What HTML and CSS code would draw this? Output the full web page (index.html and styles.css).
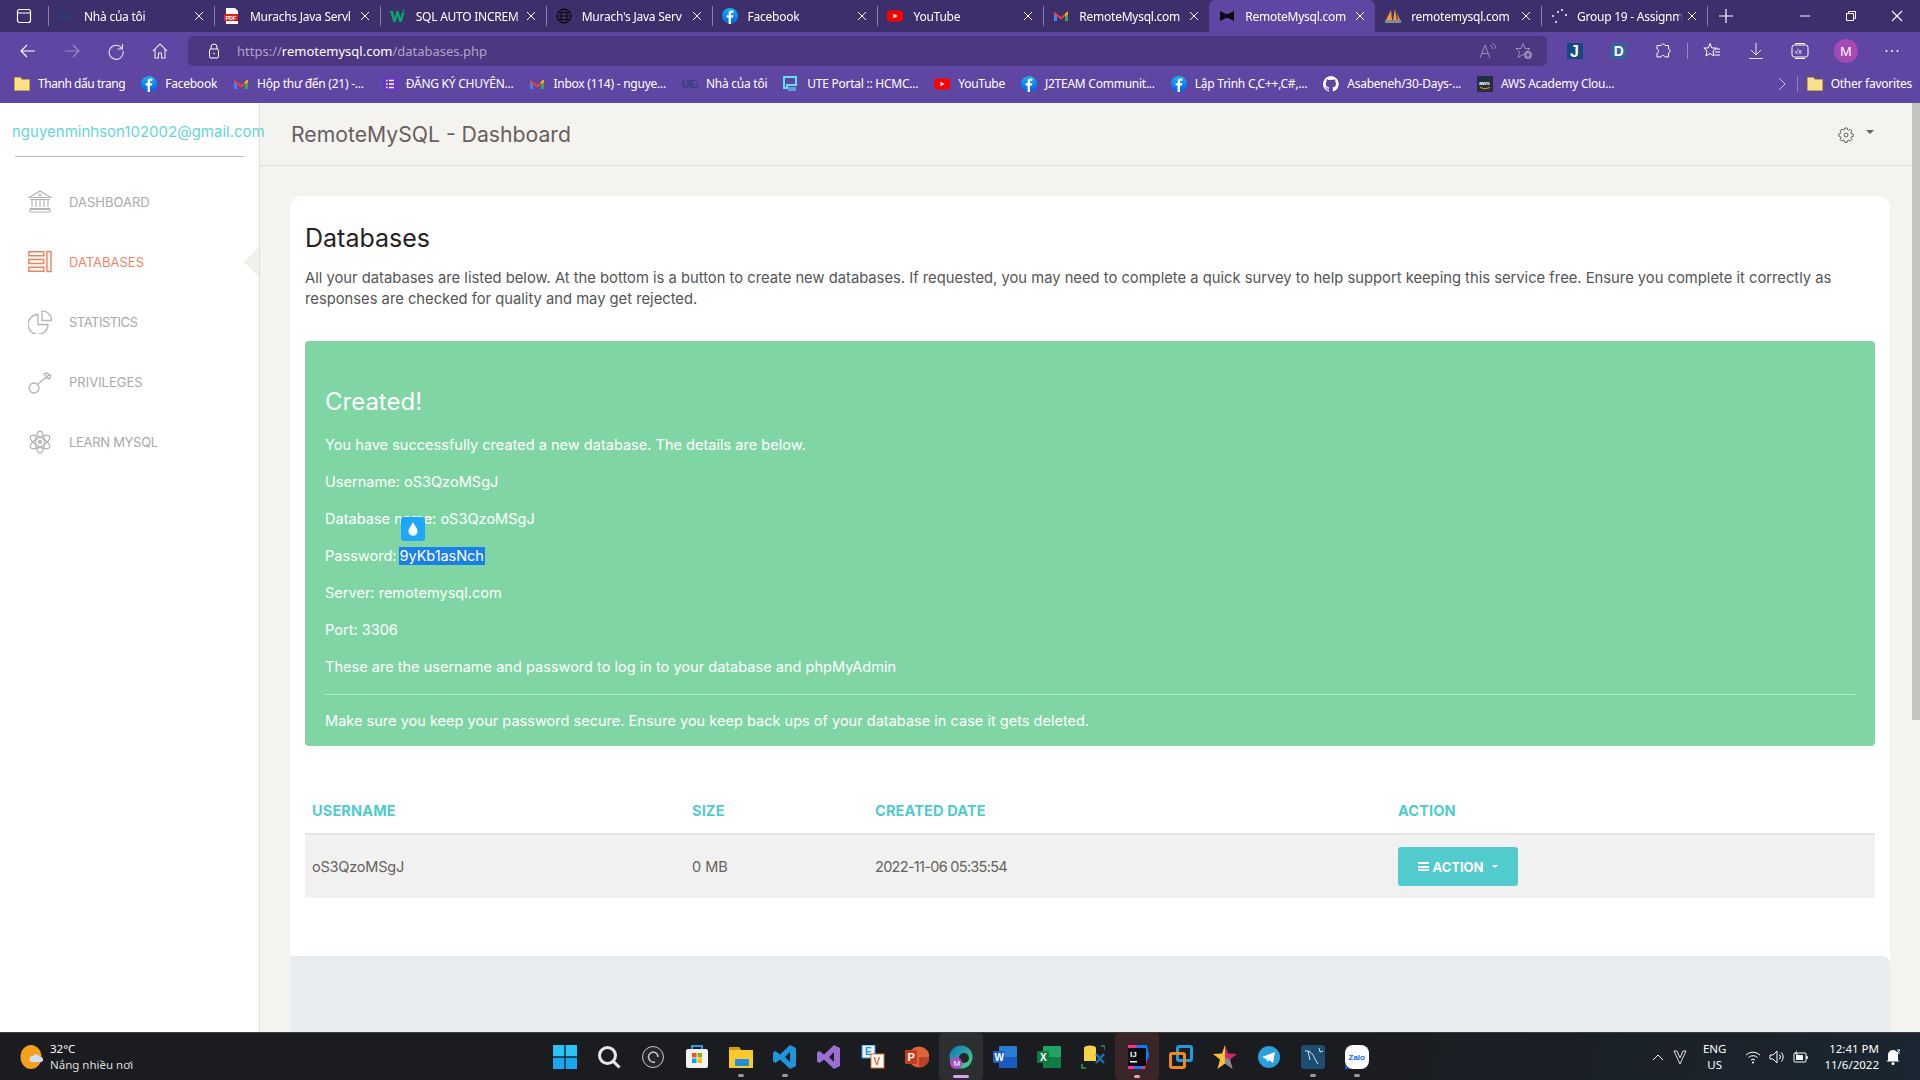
FILE: index.html
```html
<!DOCTYPE html>
<html lang="en">
<head>
<meta charset="utf-8">
<title>RemoteMySQL - Dashboard</title>
<link rel="stylesheet" href="styles.css">
</head>
<body>
<svg class="sprite" aria-hidden="true">
  <defs>
    <linearGradient id="fbg" x1="0" y1="0" x2="0" y2="1"><stop offset="0" stop-color="#19afff"/><stop offset="1" stop-color="#0062e0"/></linearGradient>
    <linearGradient id="edg" x1="0" y1="0" x2="1" y2="1"><stop offset="0" stop-color="#0c6fc4"/><stop offset="1" stop-color="#4fd97e"/></linearGradient>
    <symbol id="fb" viewBox="0 0 16 16"><circle cx="8" cy="8" r="8" fill="url(#fbg)"/><path d="M9 16V9.6h2l.4-2.4H9V5.9c0-.8.3-1.2 1.2-1.2h1.2V2.6C11 2.5 10.400 2.400 9.700 2.400 7.800 2.400 6.600 3.500 6.600 5.500v1.700H4.600v2.400h2V16z" fill="#fff"/></symbol>
    <symbol id="gm" viewBox="0 0 16 16"><path d="M1 4v9h3V7z" fill="#4285f4"/><path d="M15 4v9h-3V7z" fill="#34a853"/><path d="M1 3.500l7 5.500 7-5.500V6L8 11.500 1 6z" fill="#ea4335"/><path d="M12 5.500l3-2V6l-3 2.300z" fill="#fbbc04"/></symbol>
    <symbol id="yt" viewBox="0 0 16 16"><rect y="2.500" width="16" height="11" rx="3" fill="#f00"/><path d="M6.500 5.700v4.600L10.500 8z" fill="#fff"/></symbol>
    <symbol id="x" viewBox="0 0 10 10"><path d="M1 1l8 8M9 1l-8 8" stroke="#fff" stroke-width="1" fill="none"/></symbol>
    <symbol id="uex" viewBox="0 0 16 16"><text x="0" y="12" font-family="Liberation Sans" font-size="10" font-weight="700" fill="#2d3f78">UEx</text></symbol>
    <symbol id="folder" viewBox="0 0 16 16"><path d="M.5 1.500h6l1.500 2h7.500v11H.500z" fill="#fbe08a" stroke="#c9a23c"/></symbol>
  </defs>
</svg>

<header class="tabstrip">
  <div class="tabstrip-btn">
    <svg class="ic16" viewBox="0 0 16 16"><rect x="1.500" y="1.500" width="13" height="13" rx="2" fill="none" stroke="#fff" stroke-width="1.200"/><path d="M2 5h12" stroke="#fff"/></svg>
  </div>
  <div class="tab first">
    <svg class="ic16"><use href="#uex"/></svg><span class="tab-title">Nhà của tôi</span><svg class="tab-x"><use href="#x"/></svg>
  </div>
  <div class="tab">
    <svg class="ic16" viewBox="0 0 16 16"><path d="M2 0h9l3 3v13H2z" fill="#fff"/><rect y="6" width="14" height="7" fill="#e02020"/><text x="1.500" y="11.500" font-family="Liberation Sans" font-size="5.500" font-weight="700" fill="#fff">PDF</text></svg><span class="tab-title">Murachs Java Servl</span><svg class="tab-x"><use href="#x"/></svg>
  </div>
  <div class="tab">
    <svg class="ic16" viewBox="0 0 16 16"><path d="M0 3h3l1.500 7L6.500 3h2l2 7L12 5h2.500l-3 9h-2L7.500 8l-2 6h-2z" fill="#04aa6d"/><text x="12" y="5" font-family="Liberation Sans" font-size="5" fill="#04aa6d">3</text></svg><span class="tab-title">SQL AUTO INCREM</span><svg class="tab-x"><use href="#x"/></svg>
  </div>
  <div class="tab">
    <svg class="ic16" viewBox="0 0 16 16"><g fill="none" stroke="#0b0b12" stroke-width="1.100"><circle cx="8" cy="8" r="7"/><ellipse cx="8" cy="8" rx="3" ry="7"/><path d="M1 8h14M2 4.500h12M2 11.500h12"/></g></svg><span class="tab-title">Murach's Java Serv</span><svg class="tab-x"><use href="#x"/></svg>
  </div>
  <div class="tab">
    <svg class="ic16"><use href="#fb"/></svg><span class="tab-title">Facebook</span><svg class="tab-x"><use href="#x"/></svg>
  </div>
  <div class="tab">
    <svg class="ic16"><use href="#yt"/></svg><span class="tab-title">YouTube</span><svg class="tab-x"><use href="#x"/></svg>
  </div>
  <div class="tab pre-active">
    <svg class="ic16"><use href="#gm"/></svg><span class="tab-title">RemoteMysql.com</span><svg class="tab-x"><use href="#x"/></svg>
  </div>
  <div class="tab active">
    <svg class="ic16" viewBox="0 0 16 16"><path d="M1 3l6 3h2l6-3v10l-6-3H7l-6 3z" fill="#0b0b12"/></svg><span class="tab-title">RemoteMysql.com</span><svg class="tab-x"><use href="#x"/></svg>
  </div>
  <div class="tab post-active">
    <svg class="ic16" viewBox="0 0 16 16"><path d="M1 12L6 2l1 10zM8 12L10 1l2 11zM13 12l-1-7 3 7z" fill="#f29a3a"/><rect y="12" width="16" height="3" fill="#8a8a8a"/></svg><span class="tab-title">remotemysql.com</span><svg class="tab-x"><use href="#x"/></svg>
  </div>
  <div class="tab">
    <svg class="ic16" viewBox="0 0 16 16"><g fill="#fff"><circle cx="2" cy="8" r="1"/><circle cx="5" cy="14" r="1"/><circle cx="7" cy="4" r="1"/><circle cx="11" cy="2" r="1"/><circle cx="15" cy="7" r="1"/></g></svg><span class="tab-title">Group 19 - Assignm</span><svg class="tab-x"><use href="#x"/></svg>
  </div>
  <div class="tab-new">
    <svg class="ic16" viewBox="0 0 16 16"><path d="M8 1v14M1 8h14" stroke="#fff" stroke-width="1.200"/></svg>
  </div>
  <div class="win-controls">
    <div class="win-btn"><svg class="ic12" viewBox="0 0 12 12"><path d="M1 6h10" stroke="#fff"/></svg></div>
    <div class="win-btn"><svg class="ic12" viewBox="0 0 12 12"><path d="M1.500 3.500h7v7h-7zM3.500 3.500V1.500h7v7h-2" fill="none" stroke="#fff"/></svg></div>
    <div class="win-btn"><svg class="ic12" viewBox="0 0 12 12"><path d="M1 1l10 10M11 1L1 11" stroke="#fff" stroke-width="1.100"/></svg></div>
  </div>
</header>

<nav class="toolbar">
  <div class="tool-group nav-group">
    <div class="tool"><svg class="ic18" viewBox="0 0 18 18"><path d="M16 9H2M8 3L2 9l6 6" fill="none" stroke="#fff" stroke-width="1.100"/></svg></div>
    <div class="tool"><svg class="ic18" viewBox="0 0 18 18"><path d="M2 9h14M10 3l6 6-6 6" fill="none" stroke="#9c8dc6" stroke-width="1.100"/></svg></div>
    <div class="tool"><svg class="ic18" viewBox="0 0 18 18"><path d="M15 6.500A7 7 0 1 0 16 9M15.500 2v5h-5" fill="none" stroke="#e6e0f4" stroke-width="1.100"/></svg></div>
    <div class="tool"><svg class="ic18" viewBox="0 0 18 18"><path d="M2 9l7-7 7 7M4 7.500V16h3.500v-5h3v5H14V7.500" fill="none" stroke="#e6e0f4" stroke-width="1.100"/></svg></div>
  </div>
  <div class="address">
    <svg class="ic16 lock" viewBox="0 0 16 16"><path d="M5 6V4a3 3 0 0 1 6 0v2" fill="none" stroke="#fff"/><rect x="3.500" y="6" width="9" height="9" rx="1.500" fill="none" stroke="#fff"/><circle cx="8" cy="10.500" r=".8" fill="#fff"/></svg>
    <span class="url"><span class="url-dim">https://</span>remotemysql.com<span class="url-dim">/databases.php</span></span>
    <svg class="ic18 addr-ic" viewBox="0 0 18 18"><path d="M1 16L6 3l5 13M3 11.500h6M11 3a5 5 0 0 1 3 4M13 1a7 7 0 0 1 4 6" fill="none" stroke="#9a8cbd"/></svg>
    <svg class="ic18 addr-ic" viewBox="0 0 18 18"><path d="M8 1.500l2 5h5l-4 3.500 1 3.500-4-1-5 3 1.500-5.500L1 6.500h5z" fill="none" stroke="#9a8cbd"/><circle cx="13" cy="13" r="4" fill="#9a8cbd"/><path d="M13 10.800v4.400M10.800 13h4.400" stroke="#4d3782"/></svg>
  </div>
  <div class="tool-group ext-group">
    <div class="tool"><svg class="ic16" viewBox="0 0 16 16"><rect width="16" height="16" fill="#12497e"/><text x="3" y="14" font-family="Liberation Sans" font-size="16" font-weight="700" fill="#fff">J</text></svg></div>
    <div class="tool"><svg class="ic16 ic14" viewBox="0 0 14 14"><rect width="14" height="14" rx="1" fill="#35639f"/><text x="2.500" y="11.500" font-family="Liberation Sans" font-size="12" font-weight="700" fill="#fff">D</text></svg></div>
    <div class="tool"><svg class="ic16" viewBox="0 0 16 16"><path d="M6 2.500c0-2 4-2 4 0h3.500v3.500c2 0 2 4 0 4V14H10c0-2-4-2-4 0H2v-4c2 0 2-4 0-4V2.500z" fill="none" stroke="#fff"/></svg></div>
    <div class="tool-sep"></div>
    <div class="tool"><svg class="ic18" viewBox="0 0 18 18"><path d="M7 1.500l1.800 4.500h4.500L10 9l1 5-4-2.500L3 14l1-5L.8 6h4.500zM12 7h5M12 10h5M12 13h5" fill="none" stroke="#fff"/></svg></div>
    <div class="tool"><svg class="ic18" viewBox="0 0 18 18"><path d="M9 1v12M4 8l5 5 5-5M2 16.500h14" fill="none" stroke="#e6e0f4"/></svg></div>
    <div class="tool"><svg class="ic18" viewBox="0 0 18 18"><rect x="1" y="3" width="16" height="12" rx="2.500" fill="none" stroke="#fff"/><path d="M4 1.500h10M4 16.500h10" stroke="#fff"/><text x="3.500" y="12" font-family="Liberation Sans" font-size="7" fill="#fff">√x</text></svg></div>
    <div class="tool tool-avatar"><span class="avatar">M</span></div>
    <div class="tool tool-more"><svg class="ic16" viewBox="0 0 16 16"><g fill="#fff"><circle cx="2.500" cy="8" r="1"/><circle cx="8" cy="8" r="1"/><circle cx="13.500" cy="8" r="1"/></g></svg></div>
  </div>
</nav>

<nav class="bookmarks">
  <a class="bm bm-first"><svg class="ic16"><use href="#folder"/></svg>Thanh dấu trang</a>
  <a class="bm"><svg class="ic16"><use href="#fb"/></svg>Facebook</a>
  <a class="bm"><svg class="ic16"><use href="#gm"/></svg>Hộp thư đến (21) -...</a>
  <a class="bm bm-form"><svg class="ic16" viewBox="0 0 16 16"><rect width="16" height="16" rx="1" fill="#673ab7"/><path d="M4 4.500h1.500M7 4.500h5M4 8h1.500M7 8h5M4 11.500h1.500M7 11.500h5" stroke="#fff" stroke-width="1.300"/></svg>ĐĂNG KÝ CHUYÊN...</a>
  <a class="bm"><svg class="ic16"><use href="#gm"/></svg>Inbox (114) - nguye...</a>
  <a class="bm"><svg class="ic16"><use href="#uex"/></svg>Nhà của tôi</a>
  <a class="bm"><svg class="ic16" viewBox="0 0 16 16"><path d="M1 1h12v8H4v3H1z" fill="none" stroke="#5fe0ee" stroke-width="2"/><rect x="5" y="11" width="8" height="4" fill="#5fa0d8"/></svg>UTE Portal :: HCMC...</a>
  <a class="bm"><svg class="ic16"><use href="#yt"/></svg>YouTube</a>
  <a class="bm"><svg class="ic16"><use href="#fb"/></svg>J2TEAM Communit...</a>
  <a class="bm"><svg class="ic16"><use href="#fb"/></svg>Lập Trình C,C++,C#,...</a>
  <a class="bm"><svg class="ic16" viewBox="0 0 16 16"><path fill="#fff" d="M8 0a8 8 0 0 0-2.500 15.600c.4.100.5-.2.500-.4v-1.400c-2.200.5-2.700-1-2.700-1-.4-.9-.9-1.200-.9-1.200-.7-.5.100-.5.100-.5.800.1 1.200.8 1.200.8.700 1.200 1.900.9 2.300.7.100-.5.300-.9.500-1.100-1.800-.2-3.700-.9-3.700-4 0-.9.300-1.600.8-2.100-.1-.2-.4-1 .1-2.100 0 0 .7-.2 2.200.8a7.600 7.600 0 0 1 4 0c1.500-1 2.200-.8 2.200-.8.400 1.100.2 1.900.1 2.100.5.600.8 1.300.8 2.100 0 3.100-1.900 3.700-3.700 3.900.3.300.6.800.6 1.500v2.200c0 .2.100.5.600.4A8 8 0 0 0 8 0z"/></svg>Asabeneh/30-Days-...</a>
  <a class="bm"><svg class="ic16" viewBox="0 0 16 16"><rect width="16" height="16" fill="#232f3e"/><text x="2" y="9" font-family="Liberation Sans" font-size="6" font-weight="700" fill="#fff">aws</text><path d="M3 11.500q5 2.500 10 0" stroke="#f90" fill="none"/></svg>AWS Academy Clou...</a>
  <div class="bm-end">
    <svg class="ic12" viewBox="0 0 12 12"><path d="M3 0l6 6-6 6" fill="none" stroke="#cfc6e6"/></svg>
    <span class="bm-sep"></span>
    <a class="bm"><svg class="ic16"><use href="#folder"/></svg>Other favorites</a>
  </div>
</nav>

<div class="app">
  <aside class="sidebar">
    <div class="user-email">nguyenminhson102002@gmail.com</div>
    <hr class="side-rule">
    <ul class="side-nav">
      <li class="side-item">
        <svg class="side-ic" viewBox="0 0 24 24"><path d="M1 7.500L12 1l11 6.500zM2 22h20v-2.500H2zM4 10v7M8 10v7M12 10v7M16 10v7M20 10v7M2 18.500h20M2 9.500h20" fill="none" stroke="#b5b5b5" stroke-width="1.200"/><circle cx="12" cy="5" r="1.300" fill="none" stroke="#b5b5b5"/></svg>
        Dashboard
      </li>
      <li class="side-item active">
        <svg class="side-ic" viewBox="0 0 24 24"><path d="M.8 1.800h15v4h-15zM.8 9.500h15v4h-15zM.8 17.200h15v4h-15zM19 1.500h4v20h-4z" fill="none" stroke="#f0805a" stroke-width="1.400"/></svg>
        Databases
      </li>
      <li class="side-item item-stat">
        <svg class="side-ic" viewBox="0 0 24 24"><path d="M10 4.500A10 10 0 1 0 20 14.500H10zM14 .8A9.500 9.500 0 0 1 23.500 10.500H14z" fill="none" stroke="#b5b5b5" stroke-width="1.300"/></svg>
        Statistics
      </li>
      <li class="side-item">
        <svg class="side-ic" viewBox="0 0 24 24"><circle cx="6" cy="18" r="5" fill="none" stroke="#b5b5b5" stroke-width="1.300"/><path d="M10 14L22 4M16 9l3-1.500M16 4l5 5 2-3-4-3z" fill="none" stroke="#b5b5b5" stroke-width="1.300"/></svg>
        Privileges
      </li>
      <li class="side-item item-learn">
        <svg class="side-ic" viewBox="0 0 24 24"><g fill="none" stroke="#b5b5b5" stroke-width="1.300"><ellipse cx="12" cy="12" rx="4.500" ry="11"/><ellipse cx="12" cy="12" rx="4.500" ry="11" transform="rotate(60 12 12)"/><ellipse cx="12" cy="12" rx="4.500" ry="11" transform="rotate(120 12 12)"/></g><circle cx="12" cy="12" r="2" fill="#b5b5b5"/></svg>
        Learn MySQL
      </li>
    </ul>
  </aside>

  <main class="panel">
    <div class="panel-head">
      <h1 class="panel-title">RemoteMySQL - Dashboard</h1>
      <div class="settings">
        <svg class="ic16" viewBox="0 0 16 16"><path d="M6.800 1h2.400l.3 1.800 1.200.5 1.500-1 1.700 1.700-1 1.500.5 1.200 1.800.3v2.400l-1.800.3-.5 1.200 1 1.500-1.700 1.700-1.500-1-1.200.5-.3 1.800H6.800l-.3-1.800-1.200-.5-1.500 1-1.700-1.700 1-1.500-.5-1.200L.8 9.200V6.800l1.800-.3.5-1.200-1-1.500L4 2.100l1.500 1 1.200-.5z" fill="none" stroke="#66615b"/><circle cx="8" cy="8" r="2" fill="none" stroke="#66615b"/></svg>
        <span class="caret"></span>
      </div>
    </div>
    <section class="card">
      <div class="card-body">
        <h2 class="card-title">Databases</h2>
        <p class="intro">All your databases are listed below. At the bottom is a button to create new databases. If requested, you may need to complete a quick survey to help support keeping this service free. Ensure you complete it correctly as responses are checked for quality and may get rejected.</p>
        <div class="alert">
          <h3 class="alert-title">Created!</h3>
          <p class="alert-line">You have successfully created a new database. The details are below.</p>
          <p class="alert-line">Username: oS3QzoMSgJ</p>
          <p class="alert-line">Database name: oS3QzoMSgJ</p>
          <p class="alert-line">Password: <span class="selected">9yKb1asNch</span><span class="drop-badge"><svg class="drop-ic" viewBox="0 0 12 14"><path d="M6 1C4 4.500 2 6.500 2 9a4 4 0 0 0 8 0C10 6.500 8 4.500 6 1z" fill="#fff"/></svg></span></p>
          <p class="alert-line">Server: remotemysql.com</p>
          <p class="alert-line">Port: 3306</p>
          <p class="alert-line">These are the username and password to log in to your database and phpMyAdmin</p>
          <hr class="alert-rule">
          <p class="alert-line">Make sure you keep your password secure. Ensure you keep back ups of your database in case it gets deleted.</p>
        </div>
        <table class="db-table">
          <thead>
            <tr><th>Username</th><th>Size</th><th>Created Date</th><th>Action</th></tr>
          </thead>
          <tbody>
            <tr>
              <td class="cell-user">oS3QzoMSgJ</td><td>0 MB</td><td class="cell-date">2022-11-06 05:35:54</td>
              <td><button class="action-btn"><span class="bars"></span>Action<span class="btn-caret"></span></button></td>
            </tr>
          </tbody>
        </table>
      </div>
      <div class="card-foot"></div>
    </section>
    <div class="scrollbar"></div>
  </main>
</div>

<footer class="taskbar">
  <div class="weather">
    <svg class="ic24" viewBox="0 0 24 24"><ellipse cx="11" cy="12" rx="10.500" ry="12" fill="#f5a01f"/><path d="M12 17a3 3 0 0 1 1-6 4 4 0 0 1 7 1 2.500 2.500 0 0 1 1 5z" fill="#cfe0f5"/></svg>
    <div class="weather-text"><span class="temp">32°C</span><span class="cond">Nắng nhiều nơi</span></div>
  </div>
  <div class="dock">
    <div class="dock-item"><svg class="ic24" viewBox="0 0 24 24"><g fill="#2cc4f5"><rect width="11.300" height="11.300"/><rect x="12.700" width="11.300" height="11.300"/><rect y="12.700" width="11.300" height="11.300" fill="#18a6ee"/><rect x="12.700" y="12.700" width="11.300" height="11.300" fill="#18a6ee"/></g></svg></div>
    <div class="dock-item"><svg class="ic24" viewBox="0 0 24 24"><circle cx="10.500" cy="10.500" r="8" fill="none" stroke="#e8e8e8" stroke-width="3"/><path d="M16 16l6.500 6.500" stroke="#e8e8e8" stroke-width="3"/></svg></div>
    <div class="dock-item"><svg class="ic24" viewBox="0 0 24 24"><circle cx="12" cy="12" r="10.500" fill="#26272b" stroke="#c8c8c8"/><g fill="none" stroke="#c8c8c8" stroke-width="1.500"><path d="M12 7a5 5 0 0 1 5 5M8 14a5 5 0 0 0 6 3M8 14a5 5 0 0 1 4-7"/></g></svg></div>
    <div class="dock-item"><svg class="ic24" viewBox="0 0 24 24"><path d="M7 4V1h10v3" fill="none" stroke="#2b9be8" stroke-width="2"/><rect x="1" y="4" width="22" height="19" rx="2" fill="#f2f2f2"/><rect x="7" y="8" width="4.500" height="4.500" fill="#f25022"/><rect x="12.500" y="8" width="4.500" height="4.500" fill="#7fba00"/><rect x="7" y="13.500" width="4.500" height="4.500" fill="#00a4ef"/><rect x="12.500" y="13.500" width="4.500" height="4.500" fill="#ffb900"/></svg></div>
    <div class="dock-item run"><svg class="ic24" viewBox="0 0 24 24"><path d="M0 2h10l2 3h12v18H0z" fill="#fbc92c"/><path d="M0 2h10l2 3H0z" fill="#d99a1a"/><rect x="6" y="14" width="14" height="7" rx="1" fill="#1f8fdc"/></svg></div>
    <div class="dock-item run"><svg class="ic24" viewBox="0 0 24 24"><path d="M17 0l6 3v18l-6 3L7 14.500 2.500 18 0 16.500V7.500L2.500 6 7 9.500zM17 7l-5 5 5 5z" fill="#1e95dc"/></svg></div>
    <div class="dock-item"><svg class="ic24" viewBox="0 0 24 24"><path d="M17 0l6 3v18l-6 3L7 14.500 2.500 18 0 16.500V7.500L2.500 6 7 9.500zM17 7l-5 5 5 5z" fill="#9a6ed3"/></svg></div>
    <div class="dock-item"><svg class="ic24" viewBox="0 0 24 24"><rect x="1" y="0" width="13" height="13" fill="#e8f4ff" stroke="#1e95dc"/><text x="4" y="10" font-family="Liberation Sans" font-size="10" font-weight="700" fill="#1e95dc">E</text><rect x="10" y="9" width="13" height="14" fill="#fff" stroke="#e8642a"/><text x="12.500" y="20" font-family="Liberation Sans" font-size="10" font-weight="700" fill="#e8642a">V</text></svg></div>
    <div class="dock-item"><svg class="ic24" viewBox="0 0 24 24"><circle cx="14" cy="12" r="10.500" fill="#e0633c"/><path d="M14 12h10.500A10.500 10.500 0 0 1 14 22.500z" fill="#b9432a"/><rect y="5" width="12" height="14" rx="1" fill="#c43e1c"/><text x="2.500" y="16" font-family="Liberation Sans" font-size="11" font-weight="700" fill="#fff">P</text></svg></div>
    <div class="dock-item cur"><svg class="ic24" viewBox="0 0 24 24"><circle cx="12" cy="12" r="11.500" fill="url(#edg)"/><circle cx="15" cy="13" r="5" fill="#26272b"/><circle cx="7" cy="18" r="6" fill="#a94fc4"/><text x="4.500" y="21" font-family="Liberation Sans" font-size="8" fill="#fff">M</text></svg></div>
    <div class="dock-item"><svg class="ic24" viewBox="0 0 24 24"><rect x="6" y="1" width="18" height="22" rx="1" fill="#2b7cd3"/><rect x="6" y="12" width="18" height="11" fill="#185abd"/><rect y="6" width="12" height="12" rx="1" fill="#1e5fb8"/><text x="1.500" y="15.500" font-family="Liberation Sans" font-size="10" font-weight="700" fill="#fff">W</text></svg></div>
    <div class="dock-item"><svg class="ic24" viewBox="0 0 24 24"><rect x="6" y="1" width="18" height="22" rx="1" fill="#21a366"/><rect x="6" y="12" width="18" height="11" fill="#107c41"/><rect y="6" width="12" height="12" rx="1" fill="#0f7a3e"/><text x="3" y="15.500" font-family="Liberation Sans" font-size="10" font-weight="700" fill="#fff">X</text></svg></div>
    <div class="dock-item"><svg class="ic24" viewBox="0 0 24 24"><ellipse cx="9" cy="3" rx="6" ry="2.500" fill="#f6d24a"/><rect x="3" y="3" width="12" height="13" fill="#f6d24a"/><path d="M15 9l8 9M23 9l-8 9" stroke="#1c6fb0" stroke-width="2.500"/><path d="M20 1h4v4M1 19v4h4" fill="none" stroke="#2a9c4a" stroke-width="1.500"/></svg></div>
    <div class="dock-item ij"><svg class="ic24" viewBox="0 0 24 24"><path d="M3 0h15l6 8-4 16H3z" fill="#fc318c"/><path d="M12 0h10l2 12-8 12H9z" fill="#087cfa"/><rect x="3" y="3" width="18" height="18" fill="#0b0b0f"/><text x="5" y="12" font-family="Liberation Sans" font-size="8" font-weight="700" fill="#fff">IJ</text><rect x="5" y="16" width="7" height="1.500" fill="#fff"/></svg></div>
    <div class="dock-item"><svg class="ic24" viewBox="0 0 24 24"><rect x="8.500" y="1.500" width="14" height="14" rx="1.500" fill="none" stroke="#1e9ae0" stroke-width="3"/><rect x="1.500" y="8.500" width="14" height="14" rx="1.500" fill="none" stroke="#f08a1c" stroke-width="3"/></svg></div>
    <div class="dock-item"><svg class="ic24" viewBox="0 0 24 24"><path d="M12 0l3 8.500 9 .5-7 5.500L19.500 24 12 18.500z" fill="#d42a6b"/><path d="M12 0L9 8.500 0 9l7 5.500L4.500 24 12 18.500z" fill="#f4c430"/><path d="M12 18.500L19.500 24 17 14.500l-5-2z" fill="#8a8a95"/></svg></div>
    <div class="dock-item"><svg class="ic24" viewBox="0 0 24 24"><circle cx="12" cy="12" r="11" fill="#2a9fdc"/><path d="M5 12l13-5-2 11-4-3-2 2-.5-3.500L16 9l-7 5z" fill="#fff"/></svg></div>
    <div class="dock-item run"><svg class="ic24" viewBox="0 0 24 24"><rect width="24" height="24" rx="3" fill="#1e4d72"/><path d="M4 6c5-1 8 3 10 8l3 5M7 6l2 9M18 3l1 4 3-1" fill="none" stroke="#d5e2ec"/></svg></div>
    <div class="dock-item run"><svg class="ic24" viewBox="0 0 24 24"><rect width="24" height="24" rx="8" fill="#fff"/><path d="M0 12v6a6 6 0 0 0 6 6h12a10 10 0 0 1-18-12z" fill="#0a68ff"/><text x="3.500" y="15" font-family="Liberation Sans" font-size="8" font-weight="700" fill="#0a68ff">Zalo</text></svg></div>
  </div>
  <div class="tray">
    <svg class="ic12" viewBox="0 0 12 12"><path d="M1 9l5-5 5 5" fill="none" stroke="#fff"/></svg>
    <svg class="ic16" viewBox="0 0 16 16"><path d="M2 2l6 13 6-13h-3L8 9 5 2z" fill="none" stroke="#ddd"/></svg>
    <div class="lang"><span>ENG</span><span>US</span></div>
    <svg class="ic16" viewBox="0 0 16 16"><path d="M1 6a10 10 0 0 1 14 0M3.500 8.500a6.500 6.500 0 0 1 9 0M6 11a3 3 0 0 1 4 0" fill="none" stroke="#fff"/><circle cx="8" cy="13.500" r="1" fill="#fff"/></svg>
    <svg class="ic16" viewBox="0 0 16 16"><path d="M1 6h3l4-4v12l-4-4H1zM10.500 5.500a4 4 0 0 1 0 5M12.500 3.500a7 7 0 0 1 0 9" fill="none" stroke="#fff"/></svg>
    <svg class="ic16" viewBox="0 0 16 16"><rect x="1" y="4" width="12" height="9" rx="1" fill="none" stroke="#fff"/><rect x="3" y="6" width="7" height="5" fill="#fff"/><path d="M14 7v3" stroke="#fff" stroke-width="1.500"/><path d="M4 1L2 5h3L3 9" fill="#fff"/></svg>
    <div class="clock"><span>12:41 PM</span><span>11/6/2022</span></div>
    <svg class="ic16" viewBox="0 0 16 16"><path d="M8 1a5 5 0 0 1 5 5v5l1.500 1.500h-13L3 11V6a5 5 0 0 1 5-5z" fill="#fff"/><circle cx="8" cy="14.500" r="1.500" fill="#fff"/><path d="M12 1h3l-3 3h3" fill="none" stroke="#fff"/></svg>
  </div>
</footer>
</body>
</html>
```
FILE: styles.css
```css
* { box-sizing: border-box; }
html, body { margin: 0; padding: 0; }
body {
  width: 1920px; height: 1080px; overflow: hidden;
  display: flex; flex-direction: column;
  font-family: "Noto Sans", sans-serif;
  background: #f4f3ef;
}
.sprite { position: absolute; width: 0; height: 0; }
.ic12 { width: 12px; height: 12px; flex: none; }
.ic14 { width: 14px; height: 14px; }
.ic16 { width: 16px; height: 16px; flex: none; }
.ic18 { width: 18px; height: 18px; flex: none; }
.ic24 { width: 24px; height: 24px; flex: none; }

/* tab strip */
.tabstrip { height: 32px; background: #3c2f6b; display: flex; align-items: stretch; flex: none; }
.tabstrip-btn { width: 48px; display: flex; align-items: center; justify-content: center; }
.tab {
  width: 165.9px; flex: none; position: relative;
  display: flex; align-items: center; gap: 10px;
  padding: 0 10px 0 9px; color: #fff; font-size: 12px; letter-spacing: -.25px;
  border-left: 1px solid transparent; background-clip: padding-box;
}
.tab::before {
  content: ""; position: absolute; left: -1px; top: 6px; bottom: 6px;
  width: 1px; background: rgba(255,255,255,.4);
}
.tab.active::before, .tab.post-active::before { display: none; }
.tab.active { background: #5f46a3; border-radius: 6px 6px 0 0; }
.tab-title {
  flex: 1; min-width: 0; overflow: hidden; white-space: nowrap;
  -webkit-mask-image: linear-gradient(to right, #000 calc(100% - 6px), transparent);
  mask-image: linear-gradient(to right, #000 calc(100% - 6px), transparent);
}
.tab-x { width: 10px; height: 10px; flex: none; margin-left: -6px; }
.tab-new {
  width: 38px; flex: none; position: relative;
  display: flex; align-items: center; justify-content: center;
}
.tab-new::before {
  content: ""; position: absolute; left: 0; top: 6px; bottom: 6px;
  width: 1px; background: rgba(255,255,255,.4);
}
.win-controls { margin-left: auto; display: flex; }
.win-btn { width: 46px; display: flex; align-items: center; justify-content: center; }

/* toolbar */
.toolbar {
  height: 36px; flex: none; background: #5f46a3;
  display: flex; align-items: flex-start; padding: 4px 6px 0;
}
.tool-group { display: flex; align-items: center; height: 30px; }
.tool { width: 44px; height: 30px; display: flex; align-items: center; justify-content: center; }
.tool-sep { width: 1px; height: 16px; background: rgba(255,255,255,.35); margin: 0 2px; }
.tool-avatar { margin-left: 2px; }
.tool-more { margin-left: 2px; }
.address {
  width: 1359px; height: 30px; background: #4d3782; border-radius: 5px; margin-left: 6px;
  display: flex; align-items: center; padding: 0 14px 0 18px; flex: none;
}
.lock { margin-right: 15px; }
.url { flex: 1; color: #fff; font-size: 13px; }
.url-dim { color: #aea4c9; }
.addr-ic { margin-left: 18px; }
.ext-group { margin-left: 6px; }
.avatar {
  width: 24px; height: 24px; border-radius: 50%; background: #a549b5; color: #fff;
  font-size: 13px; display: flex; align-items: center; justify-content: center;
}

/* bookmarks */
.bookmarks {
  height: 35px; flex: none; background: #5f46a3;
  display: flex; align-items: center; gap: 16px; padding: 0 8px 4px 14px;
}
.bm { display: flex; align-items: center; gap: 8px; color: #fff; font-size: 12px; white-space: nowrap; letter-spacing: -.25px; }
.bm-first { letter-spacing: -.45px; }
.bm-form { margin-left: 2px; }
.bm-end { margin-left: auto; display: flex; align-items: center; gap: 9px; }
.bm-sep { width: 1px; height: 16px; background: rgba(255,255,255,.3); }

/* app */
.app { flex: 1; min-height: 0; display: flex; font-family: Inter, "Liberation Sans", sans-serif; }
.sidebar { width: 260px; flex: none; background: #fff; border-right: 1px solid #ddd; position: relative; z-index: 1; }
.user-email {
  padding: 19px 0 0 12px; font-size: 15px; line-height: 20px;
  color: #66d5d8; white-space: nowrap;
}
.side-rule { margin: 14px 15px 0; width: 229px; border: 0; border-top: 1px solid #bbb; }
.side-nav { list-style: none; margin: 15px 0 0; padding: 0; }
.side-item {
  height: 60px; display: flex; align-items: center; gap: 17px; padding-left: 28px;
  font-size: 13px; text-transform: uppercase; color: #a9a9a9;
  position: relative;
}
.item-stat { letter-spacing: -.5px; }
.item-learn { letter-spacing: -.3px; }
.side-ic { width: 24px; height: 24px; flex: none; }
.side-item.active { color: #f0856a; }
.side-item.active::after {
  content: ""; position: absolute; right: 0; top: 15px;
  border: 15px solid transparent; border-left-width: 0;
  border-right-color: #f0efea; border-right-width: 15px;
}

.panel { flex: 1; min-width: 0; position: relative; background: #f4f3ef; padding: 0 30px; }
.panel-head {
  height: 63px; margin: 0 -30px; padding: 0 46px 0 31px;
  border-bottom: 1px solid #ddd;
  display: flex; align-items: center; justify-content: space-between;
}
.panel-title { margin: 0; font-size: 21.2px; font-weight: 400; color: #66615b; }
.settings { display: flex; align-items: center; gap: 12px; margin-top: 2px; }
.caret { border: 4px solid transparent; border-top-color: #66615b; border-bottom-width: 0; margin-top: -6px; }

.card { margin-top: 30px; background: #fff; border-radius: 12px 12px 0 0; overflow: hidden; height: 836px; display: flex; flex-direction: column; }
.card-body { padding: 27px 15px 0; flex: none; }
.card-title { margin: 0; font-size: 25px; line-height: 30px; font-weight: 400; color: #252422; }
.intro { margin: 15px 0 0; font-size: 14.75px; line-height: 21px; color: #555; }
.alert { margin-top: 31px; background: #7fd6a4; border-radius: 4px; padding: 46px 20px 14px; color: #fff; }
.alert-title { margin: 0 0 18px; font-size: 24px; line-height: 30px; font-weight: 400; }
.alert-line { margin: 16px 0 0; font-size: 14.55px; line-height: 21px; position: relative; }
.alert-rule { margin: 16px 0 16px; border: 0; border-top: 1px solid rgba(255,255,255,.45); }
.alert-rule + .alert-line { margin-top: 0; }
.selected { background: #1a7fe8; margin-left: -2px; padding: 0 1px; letter-spacing: -.1px; }
.drop-badge {
  position: absolute; left: 76px; top: -29px; width: 24px; height: 24px;
  background: #1ea5fc; border-radius: 3px; display: flex; align-items: center; justify-content: center;
}
.drop-ic { width: 14px; height: 16px; }
.db-table { margin-top: 44px; width: 100%; border-collapse: collapse; table-layout: fixed; font-size: 14.5px; }
.db-table th {
  height: 44px; padding: 0 7px 2px; text-align: left; font-weight: 700; text-transform: uppercase;
  color: #51cbce; font-size: 14.5px; letter-spacing: .15px; border-bottom: 2px solid #e3e3e8;
}
.db-table th:nth-child(1) { width: 380px; }
.db-table th:nth-child(2) { width: 183px; }
.db-table th:nth-child(3) { width: 523px; }
.db-table td { height: 64px; padding: 0 7px; background: #f1f1f1; color: #66615b; }
.db-table .cell-user { letter-spacing: -.2px; }
.db-table .cell-date { letter-spacing: -.7px; }
.action-btn {
  width: 120px; height: 39px; border: 0; border-radius: 3px; background: #51cbce; color: #fff;
  font: 700 13px Inter, sans-serif; text-transform: uppercase;
  display: flex; align-items: center; justify-content: center; gap: 3px;
}
.bars { width: 11px; height: 9px; border-top: 2px solid #fff; border-bottom: 2px solid #fff; position: relative; }
.bars::after { content: ""; position: absolute; left: 0; right: 0; top: 1.5px; height: 2px; background: #fff; }
.btn-caret { border: 3.500px solid transparent; border-top-color: #fff; border-bottom-width: 0; margin-left: 5px; }
.card-foot { margin-top: 58px; flex: 1; background: #e9ecef; border-radius: 0 8px 0 0; }
.scrollbar { position: absolute; right: 0; top: 0; width: 8px; height: 617px; background: #c4c4c0; }

/* taskbar */
.taskbar {
  height: 48px; flex: none; position: relative;
  background: linear-gradient(100deg, #1b1c20 70%, #1a2631);
  border-top: 1px solid #3a3b3f; color: #fff;
  display: flex; align-items: center; padding: 0 20px;
}
.weather { width: 523px; display: flex; align-items: center; gap: 6px; }
.weather-text { display: flex; flex-direction: column; font-size: 11.5px; line-height: 16px; }
.temp { color: #fff; }
.cond { color: #ddd; }
.dock { display: flex; height: 47px; }
.dock-item { width: 44px; display: flex; align-items: center; justify-content: center; position: relative; }
.dock-item.run::after {
  content: ""; position: absolute; left: 19px; bottom: 3px; width: 6px; height: 3px; border-radius: 2px; background: #9a9a9a;
}
.dock-item.cur { background: #2d2e32; border-radius: 4px; }
.dock-item.cur::after {
  content: ""; position: absolute; left: 14px; bottom: 2px; width: 16px; height: 3px; border-radius: 2px; background: #d9a6ea;
}
.dock-item.ij { background: #3a2528; border-radius: 4px; }
.dock-item.ij::after {
  content: ""; position: absolute; left: 19px; bottom: 2px; width: 6px; height: 3px; border-radius: 2px; background: #f4a3a8;
}
.tray { margin-left: auto; display: flex; align-items: center; margin-right: -1px; gap: 8px; }
.lang, .clock { display: flex; flex-direction: column; font-size: 11.5px; line-height: 16px; }
.lang { align-items: center; margin: 0 11px 0 7px; }
.clock { align-items: flex-end; margin: 0 -2px 0 7px; }
```
